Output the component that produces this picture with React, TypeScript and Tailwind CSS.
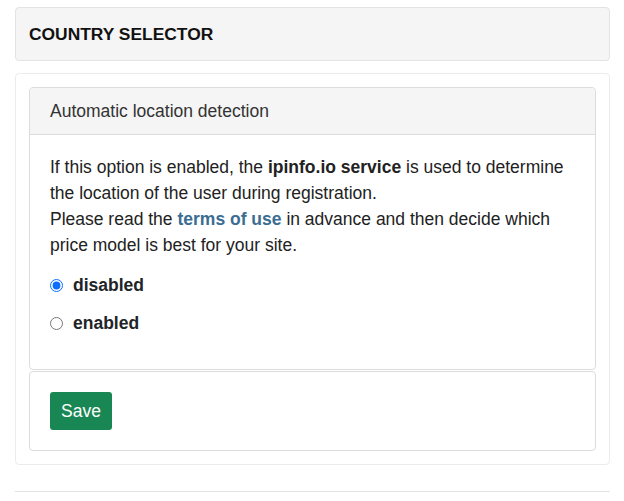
import React from 'react'

export default function App() {
  return (
    <div className="min-h-[501px] bg-white pl-[15px] pr-[14px] pt-[7px] text-[#212529] font-['Liberation_Sans',Arial,sans-serif]">
      <div className="rounded border border-[#e3e3e3] bg-[#f5f5f5]">
        <h2 className="h-[52px] px-[13px] flex items-center text-[17.4px] font-bold text-[#111]">COUNTRY SELECTOR</h2>
      </div>

      <div className="mt-[12px] rounded border border-[#ececec] p-[13px]">
        <div className="rounded border border-[#dcdcdc]">
          <div className="h-[47px] px-[20px] flex items-center border-b border-[#dcdcdc] bg-[#f5f5f5] rounded-t text-[17.5px] text-[#333]">
            Automatic location detection
          </div>
          <div className="px-[20px] pt-[19px] pb-[33px]">
            <p className="text-[17.5px] leading-[26px] text-[#222]">
              If this option is enabled, the <b>ipinfo.io service</b> is used to determine the location of the user during registration.
              <br />
              Please read the <a href="#" className="font-bold text-[#3a6d91]">terms of use</a> in advance and then decide which price model is best for your site.
            </p>
            <div className="mt-[14px] flex flex-col gap-[12px]">
              <label className="flex items-center gap-[10px] text-[17.5px] font-bold h-[26px]">
                <input type="radio" name="detect" defaultChecked className="w-[13px] h-[13px] m-0 accent-[#0d6efd]" />
                disabled
              </label>
              <label className="flex items-center gap-[10px] text-[17.5px] font-bold h-[26px]">
                <input type="radio" name="detect" className="w-[13px] h-[13px] m-0" />
                enabled
              </label>
            </div>
          </div>
        </div>
        <div className="mt-[1px] rounded border border-[#dcdcdc] px-[20px] py-[20px]">
          <button className="h-[38px] px-[11px] rounded-[3px] bg-[#198754] text-white text-[17.5px]">Save</button>
        </div>
      </div>

      <div className="mt-[26px] h-[1px] bg-[#e3e3e3]" />
    </div>
  )
}
